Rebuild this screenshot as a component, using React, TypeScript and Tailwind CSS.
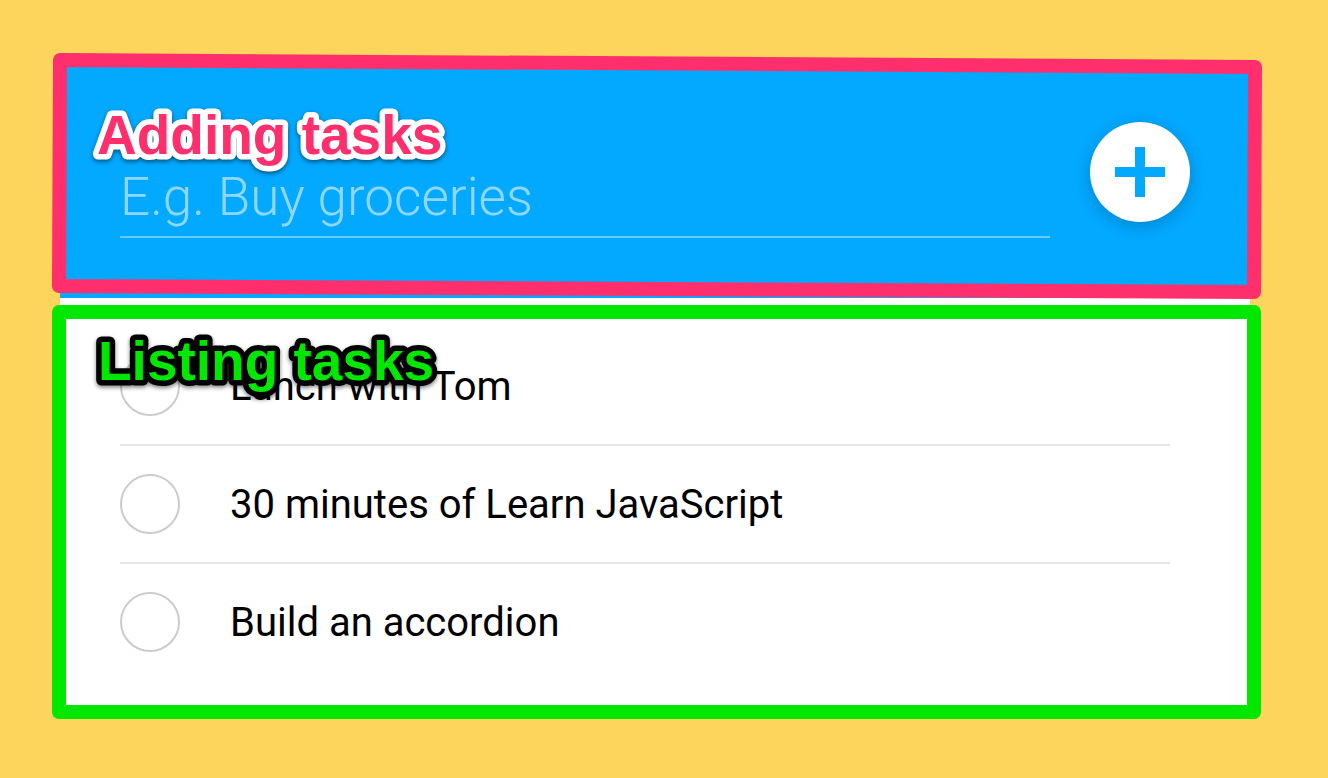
import React from "react";

const tasks = ["Lunch with Tom", "30 minutes of Learn JavaScript", "Build an accordion"];

function Outline({ points, viewBox, className }: { points: string; viewBox: string; className: string }) {
  return (
    <svg
      viewBox={viewBox}
      preserveAspectRatio="none"
      className={`block h-full w-full overflow-visible ${className}`}
      fill="none"
      strokeWidth="14"
      strokeLinejoin="round"
      aria-hidden="true"
    >
      <polygon points={points} vectorEffect="non-scaling-stroke" />
    </svg>
  );
}

function Caption({ text, className }: { text: string; className: string }) {
  return (
    <svg
      className={`block h-16 w-[360px] overflow-visible font-['Liberation_Sans',sans-serif] text-[55px] font-bold drop-shadow-[0_2px_2px_rgba(0,0,0,0.5)] ${className}`}
      strokeWidth="11"
      strokeLinejoin="round"
      paintOrder="stroke"
    >
      <text x="0" y="51">
        {text}
      </text>
    </svg>
  );
}

export default function App() {
  return (
    <div className="min-h-screen bg-[#fdd45c] py-[60px] pr-[78px] pl-[60px] font-['Roboto',sans-serif]">
      <main className="rounded-lg bg-white">
        <form
          className="relative flex items-start gap-10 rounded-t-lg bg-[#03a8ff] p-[60px]"
          onSubmit={(e) => e.preventDefault()}
        >
          <input
            type="text"
            aria-label="New task"
            placeholder="E.g. Buy groceries"
            className="mt-10 h-[78px] min-w-0 flex-1 border-b-2 border-white/40 bg-transparent text-[53px] font-light text-white outline-none placeholder:text-white/55"
          />
          <button
            type="submit"
            aria-label="Add task"
            className="mt-0.5 flex size-[100px] shrink-0 items-center justify-center rounded-full bg-white shadow-[0_4px_16px_rgba(0,0,0,0.2)]"
          >
            <svg viewBox="0 0 50 50" className="size-[50px] fill-[#03a8ff]" aria-hidden="true">
              <path d="M20 0h10v20h20v10H30v20H20V30H0V20h20z" />
            </svg>
          </button>
          <div className="pointer-events-none absolute top-0 -right-[5px] bottom-[6px] -left-px">
            <Outline viewBox="0 0 1196 232" points="1,0 1196,7 1195,232 0,226" className="stroke-[#ff2f6e]" />
          </div>
          <h2 className="pointer-events-none absolute top-[43px] left-[37px]">
            <Caption text="Adding tasks" className="fill-[#ff2f6e] stroke-white" />
          </h2>
        </form>

        <section className="relative pt-[30px] pr-20 pb-[30px] pl-[60px]">
          <ul className="divide-y-2 divide-[#e6e6e6]">
            {tasks.map((task) => (
              <li key={task}>
                <label className="flex h-[116px] items-center gap-[50px] text-[40px] text-black">
                  <input
                    type="checkbox"
                    className="size-[60px] shrink-0 appearance-none rounded-full border-2 border-[#cccccc] bg-white checked:bg-[#03a8ff]"
                  />
                  <span className="pt-0.5">{task}</span>
                </label>
              </li>
            ))}
          </ul>
          <div className="pointer-events-none absolute top-[14px] -right-[4px] -bottom-[2px] -left-px">
            <Outline viewBox="0 0 1195 400" points="0,0 1195,0 1195,400 0,400" className="stroke-[#00e800]" />
          </div>
          <h2 className="pointer-events-none absolute top-[31px] left-[38px]">
            <Caption text="Listing tasks" className="fill-[#00e800] stroke-black" />
          </h2>
        </section>
      </main>
    </div>
  );
}
